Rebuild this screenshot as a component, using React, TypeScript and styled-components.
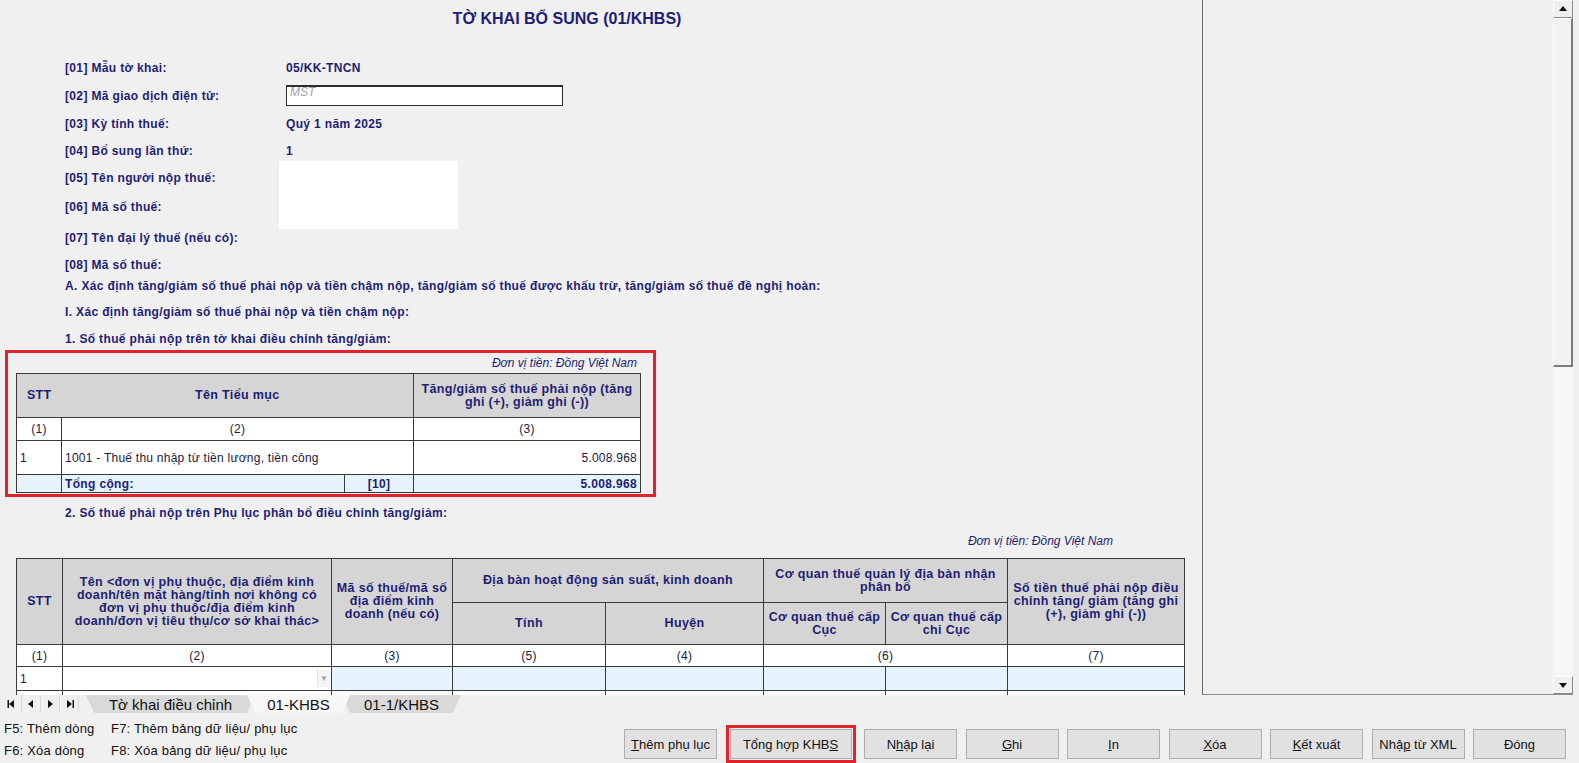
import React from "react";
import styled, { createGlobalStyle } from "styled-components";

const NAVY = "#1e1e74";
const LINE = "#3a3a3a";
const FONT = `"Liberation Sans", Arial, sans-serif`;

const GlobalStyle = createGlobalStyle`
  html, body {
    margin: 0;
    padding: 0;
    background: #f0f0f0;
  }
  body {
    font-family: ${FONT};
  }
`;

const Window = styled.div`
  width: 1579px;
  height: 763px;
  display: flex;
  flex-direction: column;
  overflow: hidden;
  background: #f0f0f0;
`;

const Viewport = styled.div`
  display: flex;
  height: 695px;
`;

const Sheet = styled.div`
  width: 1203px;
  height: 695px;
  box-sizing: border-box;
  border-right: 1px solid #6a6a6a;
  overflow: hidden;
`;

const Blank = styled.div`
  flex: 1;
  border-bottom: 1px solid #8c8c8c;
`;

const Edge = styled.div`
  width: 6px;
`;

const ScrollBar = styled.div`
  width: 20px;
  display: flex;
  flex-direction: column;
  background: #f6f6f6;
  border-bottom: 1px solid #8c8c8c;
`;

const ArrowBtn = styled.div`
  height: 18px;
  display: flex;
  align-items: center;
  justify-content: center;
  background: #f0f0f0;
  box-sizing: border-box;
  border-right: 1px solid #8a8a8a;
  border-bottom: 1px solid #8a8a8a;
  border-top: 1px solid #ffffff;
  border-left: 1px solid #ffffff;
`;

const Thumb = styled.div`
  height: 349px;
  box-sizing: border-box;
  background: #f2f2f2;
  border-top: 1px solid #ffffff;
  border-left: 1px solid #ffffff;
  border-right: 2px solid #7c7c7c;
  border-bottom: 2px solid #7c7c7c;
`;

const Track = styled.div`
  flex: 1;
`;

const Title = styled.div`
  width: 1134px;
  height: 38px;
  line-height: 38px;
  text-align: center;
  font-weight: bold;
  font-size: 16px;
  color: ${NAVY};
`;

const Fields = styled.div`
  display: grid;
  grid-template-columns: 214px 1fr;
  grid-template-rows: 28px 28px 29px 25px 29px 28px 34px 21px;
  margin: 15.5px 0 0 65px;
  width: 700px;
`;

const Label = styled.div`
  grid-column: 1;
  display: flex;
  align-items: center;
  font-weight: bold;
  font-size: 12px;
  letter-spacing: 0.35px;
  color: ${NAVY};
  white-space: nowrap;
`;

const Value = styled.div`
  grid-column: 2;
  display: flex;
  align-items: center;
  padding-left: 7px;
  font-weight: bold;
  font-size: 12px;
  letter-spacing: 0.35px;
  color: ${NAVY};
`;

const CodeBox = styled.div`
  width: 277px;
  height: 21px;
  box-sizing: border-box;
  background: #ffffff;
  border: 1px solid #2e2e2e;
  border-top-width: 2px;
  display: flex;
  align-items: flex-start;
`;

const Placeholder = styled.span`
  font-style: italic;
  font-weight: normal;
  font-size: 12px;
  letter-spacing: 0;
  line-height: 11px;
  color: #a2a2a2;
  margin-left: 3px;
`;

const Redacted = styled.div`
  grid-column: 2;
  grid-row: span 2;
  width: 179px;
  margin: -2.5px 0 -8.5px;
  background: #ffffff;
`;

const Line = styled.div<{ $h: number }>`
  height: ${(p) => p.$h}px;
  display: flex;
  align-items: center;
  padding-left: 65px;
  font-weight: bold;
  font-size: 12px;
  letter-spacing: 0.35px;
  color: ${NAVY};
  white-space: nowrap;
`;

const RedFrame = styled.div`
  margin-left: 5px;
  width: 651px;
  height: 147px;
  box-sizing: border-box;
  border: 3px solid #e1232b;
  padding-left: 8px;
`;

const Note = styled.div<{ $w: number; $h: number; $pad: number }>`
  width: ${(p) => p.$w}px;
  height: ${(p) => p.$h}px;
  box-sizing: border-box;
  padding-right: ${(p) => p.$pad}px;
  display: flex;
  align-items: center;
  justify-content: flex-end;
  font-style: italic;
  font-size: 12px;
  color: ${NAVY};
`;

const Table = styled.table<{ $w: number; $ml?: number; $mt?: number }>`
  width: ${(p) => p.$w}px;
  margin-left: ${(p) => p.$ml ?? 0}px;
  margin-top: ${(p) => p.$mt ?? 0}px;
  border-collapse: collapse;
  table-layout: fixed;
  font-family: ${FONT};
`;

const Col = styled.col<{ $w: number }>`
  width: ${(p) => p.$w}px;
`;

const Tr = styled.tr<{ $h: number }>`
  height: ${(p) => p.$h}px;
`;

const Th = styled.th<{ $open?: boolean }>`
  background: #d5d5d5;
  border: 1px solid ${LINE};
  ${(p) => (p.$open ? "border-right-style: hidden;" : "")}
  color: ${NAVY};
  font-weight: bold;
  font-size: 12.5px;
  letter-spacing: 0.35px;
  line-height: 13px;
  padding: 0 3px;
  text-align: center;
  vertical-align: middle;
`;

const Td = styled.td<{ $align?: "left" | "center" | "right"; $tint?: boolean; $bold?: boolean }>`
  border: 1px solid ${LINE};
  background: ${(p) => (p.$tint ? "#e6f2fc" : "#ffffff")};
  text-align: ${(p) => p.$align ?? "left"};
  font-weight: ${(p) => (p.$bold ? "bold" : "normal")};
  color: ${(p) => (p.$bold ? NAVY : "#1a1a3a")};
  font-size: 12px;
  letter-spacing: ${(p) => (p.$bold ? "0.35px" : "0.25px")};
  padding: 0 3px;
  vertical-align: middle;
  white-space: nowrap;
`;

const ComboCell = styled.div`
  display: flex;
  justify-content: flex-end;
  align-items: center;
  margin-right: -2px;
`;

const ComboArrow = styled.div`
  width: 12px;
  height: 17px;
  display: flex;
  align-items: center;
  justify-content: center;
  background: #f4f4f4;
  border-left: 1px solid #e0e0e0;
  color: #a0a0a0;
  font-size: 8px;
`;

const TabBar = styled.div`
  height: 18px;
  display: flex;
  align-items: stretch;
`;

const Nav = styled.div`
  width: 86px;
  display: flex;
  align-items: center;
  padding-left: 3px;
  box-sizing: border-box;
`;

const NavBtn = styled.div`
  width: 19px;
  height: 18px;
  display: flex;
  align-items: center;
  justify-content: center;
  border-right: 1px solid #d8d8d8;
  box-sizing: border-box;
`;

const Tab = styled.div<{ $w: number; $active?: boolean }>`
  width: ${(p) => p.$w}px;
  margin-right: -8px;
  display: flex;
  align-items: center;
  justify-content: center;
  font-size: 15px;
  color: #111;
  background: ${(p) => (p.$active ? "#f7f7f7" : "#d9d9d9")};
  clip-path: polygon(0 0, 100% 0, calc(100% - 8px) 100%, 8px 100%);
  z-index: ${(p) => (p.$active ? 2 : 1)};
`;

const Footer = styled.div`
  flex: 1;
  display: flex;
`;

const Hints = styled.div`
  display: grid;
  grid-template-columns: 107px auto;
  grid-template-rows: 22px 22px;
  padding: 4px 0 0 4px;
  font-size: 13px;
  letter-spacing: 0.2px;
  color: #111;
  align-items: center;
  white-space: nowrap;
`;

const Buttons = styled.div`
  margin-left: auto;
  padding: 12px 13px 0 0;
  display: flex;
  align-items: center;
  align-self: flex-start;
  gap: 8.5px;
  height: 38px;
`;

const Btn = styled.button<{ $w?: number }>`
  width: ${(p) => p.$w ?? 93}px;
  height: 30px;
  padding: 0;
  background: #e1e1e1;
  border: 1px solid #adadad;
  font-family: ${FONT};
  font-size: 13px;
  color: #111;
`;

const Highlight = styled.div`
  display: flex;
  padding: 1px;
  border: 3px solid #e1232b;
`;

const Key = styled.u`
  text-decoration: underline;
`;

const Tri = ({ dir, bar }: { dir: "left" | "right" | "up" | "down"; bar?: "before" | "after" }) => {
  const paths: Record<string, string> = {
    left: "M7 1 L2 5 L7 9 Z",
    right: "M3 1 L8 5 L3 9 Z",
    up: "M1 7 L5 2 L9 7 Z",
    down: "M1 3 L5 8 L9 3 Z",
  };
  return (
    <svg width="10" height="10" viewBox="0 0 10 10">
      {bar === "before" && <rect x="0.5" y="1" width="1.5" height="8" fill="#111" />}
      <path d={paths[dir]} fill="#111" />
      {bar === "after" && <rect x="8.5" y="1" width="1.5" height="8" fill="#111" />}
    </svg>
  );
};

export default function App() {
  return (
    <>
      <GlobalStyle />
      <Window>
        <Viewport>
          <Sheet>
            <Title>TỜ KHAI BỔ SUNG (01/KHBS)</Title>
            <Fields>
              <Label>[01] Mẫu tờ khai:</Label>
              <Value>05/KK-TNCN</Value>
              <Label>[02] Mã giao dịch điện tử:</Label>
              <Value>
                <CodeBox>
                  <Placeholder>MST</Placeholder>
                </CodeBox>
              </Value>
              <Label>[03] Kỳ tính thuế:</Label>
              <Value>Quý 1 năm 2025</Value>
              <Label>[04] Bổ sung lần thứ:</Label>
              <Value>1</Value>
              <Label>[05] Tên người nộp thuế:</Label>
              <Redacted />
              <Label>[06] Mã số thuế:</Label>
              <Label>[07] Tên đại lý thuế (nếu có):</Label>
              <Label>[08] Mã số thuế:</Label>
            </Fields>
            <Line $h={21}>
              A. Xác định tăng/giảm số thuế phải nộp và tiền chậm nộp, tăng/giảm số thuế được khấu trừ, tăng/giảm số thuế đề nghị hoàn:
            </Line>
            <Line $h={31}>I. Xác định tăng/giảm số thuế phải nộp và tiền chậm nộp:</Line>
            <Line $h={22.5}>1. Số thuế phải nộp trên tờ khai điều chỉnh tăng/giảm:</Line>

            <RedFrame>
              <Note $w={624} $h={20} $pad={3}>
                Đơn vị tiền: Đồng Việt Nam
              </Note>
              <Table $w={624}>
                <colgroup>
                  <Col $w={45} />
                  <Col $w={283} />
                  <Col $w={69} />
                  <Col $w={227} />
                </colgroup>
                <tbody>
                  <Tr $h={44}>
                    <Th $open>STT</Th>
                    <Th colSpan={2}>Tên Tiểu mục</Th>
                    <Th>Tăng/giảm số thuế phải nộp (tăng ghi (+), giảm ghi (-))</Th>
                  </Tr>
                  <Tr $h={23}>
                    <Td $align="center">(1)</Td>
                    <Td $align="center" colSpan={2}>
                      (2)
                    </Td>
                    <Td $align="center">(3)</Td>
                  </Tr>
                  <Tr $h={34}>
                    <Td>1</Td>
                    <Td colSpan={2}>1001 - Thuế thu nhập từ tiền lương, tiền công</Td>
                    <Td $align="right">5.008.968</Td>
                  </Tr>
                  <Tr $h={18}>
                    <Td $tint />
                    <Td $tint $bold>
                      Tổng cộng:
                    </Td>
                    <Td $tint $bold $align="center">
                      [10]
                    </Td>
                    <Td $tint $bold $align="right">
                      5.008.968
                    </Td>
                  </Tr>
                </tbody>
              </Table>
            </RedFrame>

            <Line $h={31}>2. Số thuế phải nộp trên Phụ lục phân bổ điều chỉnh tăng/giảm:</Line>
            <Note $w={1113} $h={26} $pad={0}>
              Đơn vị tiền: Đồng Việt Nam
            </Note>
            <Table $w={1168} $ml={16} $mt={4}>
              <colgroup>
                <Col $w={46} />
                <Col $w={269} />
                <Col $w={121} />
                <Col $w={153} />
                <Col $w={158} />
                <Col $w={122} />
                <Col $w={122} />
                <Col $w={177} />
              </colgroup>
              <tbody>
                <Tr $h={44}>
                  <Th rowSpan={2}>STT</Th>
                  <Th rowSpan={2}>
                    Tên &lt;đơn vị phụ thuộc, địa điểm kinh
                    <br />
                    doanh/tên mặt hàng/tỉnh nơi không có
                    <br />
                    đơn vị phụ thuộc/địa điểm kinh
                    <br />
                    doanh/đơn vị tiêu thụ/cơ sở khai thác&gt;
                  </Th>
                  <Th rowSpan={2}>Mã số thuế/mã số địa điểm kinh doanh (nếu có)</Th>
                  <Th colSpan={2}>Địa bàn hoạt động sản suất, kinh doanh</Th>
                  <Th colSpan={2}>Cơ quan thuế quản lý địa bàn nhận phân bổ</Th>
                  <Th rowSpan={2}>Số tiền thuế phải nộp điều chỉnh tăng/ giảm (tăng ghi (+), giảm ghi (-))</Th>
                </Tr>
                <Tr $h={42}>
                  <Th>Tính</Th>
                  <Th>Huyện</Th>
                  <Th>Cơ quan thuế cấp Cục</Th>
                  <Th>Cơ quan thuế cấp chi Cục</Th>
                </Tr>
                <Tr $h={22}>
                  <Td $align="center">(1)</Td>
                  <Td $align="center">(2)</Td>
                  <Td $align="center">(3)</Td>
                  <Td $align="center">(5)</Td>
                  <Td $align="center">(4)</Td>
                  <Td $align="center" colSpan={2}>
                    (6)
                  </Td>
                  <Td $align="center">(7)</Td>
                </Tr>
                <Tr $h={24}>
                  <Td>1</Td>
                  <Td>
                    <ComboCell>
                      <ComboArrow>▼</ComboArrow>
                    </ComboCell>
                  </Td>
                  <Td $tint />
                  <Td $tint />
                  <Td $tint />
                  <Td $tint />
                  <Td $tint />
                  <Td $tint />
                </Tr>
                <Tr $h={24}>
                  <Td />
                  <Td />
                  <Td />
                  <Td />
                  <Td />
                  <Td />
                  <Td />
                  <Td />
                </Tr>
              </tbody>
            </Table>
          </Sheet>
          <Blank />
          <ScrollBar>
            <ArrowBtn>
              <Tri dir="up" />
            </ArrowBtn>
            <Thumb />
            <Track />
            <ArrowBtn>
              <Tri dir="down" />
            </ArrowBtn>
          </ScrollBar>
          <Edge />
        </Viewport>

        <TabBar>
          <Nav>
            <NavBtn>
              <Tri dir="left" bar="before" />
            </NavBtn>
            <NavBtn>
              <Tri dir="left" />
            </NavBtn>
            <NavBtn>
              <Tri dir="right" />
            </NavBtn>
            <NavBtn>
              <Tri dir="right" bar="after" />
            </NavBtn>
          </Nav>
          <Tab $w={169}>Tờ khai điều chỉnh</Tab>
          <Tab $w={103} $active>
            01-KHBS
          </Tab>
          <Tab $w={119}>01-1/KHBS</Tab>
        </TabBar>

        <Footer>
          <Hints>
            <span>F5: Thêm dòng</span>
            <span>F7: Thêm bảng dữ liệu/ phụ lục</span>
            <span>F6: Xóa dòng</span>
            <span>F8: Xóa bảng dữ liệu/ phụ lục</span>
          </Hints>
          <Buttons>
            <Btn>
              <Key>T</Key>hêm phụ lục
            </Btn>
            <Highlight>
              <Btn $w={122}>
                Tổng hợp KHB<Key>S</Key>
              </Btn>
            </Highlight>
            <Btn>
              N<Key>h</Key>ập lại
            </Btn>
            <Btn>
              <Key>G</Key>hi
            </Btn>
            <Btn>
              <Key>I</Key>n
            </Btn>
            <Btn>
              <Key>X</Key>óa
            </Btn>
            <Btn>
              <Key>K</Key>ết xuất
            </Btn>
            <Btn>
              Nhậ<Key>p</Key> từ XML
            </Btn>
            <Btn>
              Đón<Key>g</Key>
            </Btn>
          </Buttons>
        </Footer>
      </Window>
    </>
  );
}
